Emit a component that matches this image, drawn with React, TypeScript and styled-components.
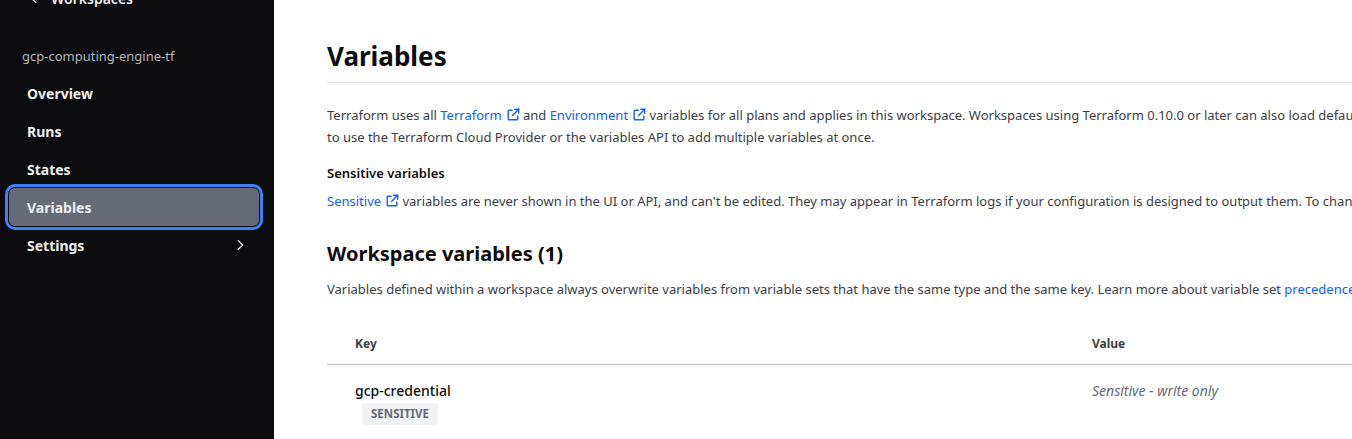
import React from "react";
import styled, { createGlobalStyle } from "styled-components";

const GlobalStyle = createGlobalStyle`
  html, body {
    margin: 0;
    padding: 0;
    height: 100%;
    overflow: hidden;
    background: #ffffff;
    font-family: "Noto Sans", "Open Sans", sans-serif;
  }
`;

const Layout = styled.div`
  display: flex;
  width: 1352px;
  height: 439px;
  overflow: hidden;
`;

const Sidebar = styled.nav`
  flex: 0 0 274px;
  background-color: #0c0c0e;
  display: flex;
  flex-direction: column;
  margin-top: -14px;
  padding: 0 13px 0 7px;
  box-sizing: border-box;
`;

const BackLink = styled.a`
  display: flex;
  align-items: center;
  gap: 10px;
  height: 24px;
  padding-left: 20px;
  color: #efeff1;
  font-size: 14px;
  font-weight: 600;
  text-decoration: none;
`;

const WorkspaceName = styled.div`
  margin: 36px 0 8px 15px;
  color: #b2b6bd;
  font-size: 13px;
  line-height: 20px;
`;

const NavList = styled.ul`
  list-style: none;
  margin: 0;
  padding: 0;
  display: flex;
  flex-direction: column;
`;

const NavItem = styled.li<{ $active?: boolean }>`
  display: flex;
  align-items: center;
  justify-content: space-between;
  height: 38px;
  padding: 0 14px 0 ${(p) => (p.$active ? "18px" : "20px")};
  box-sizing: border-box;
  border-radius: 6px;
  color: #efeff1;
  font-size: 14px;
  font-weight: 700;
  background: ${(p) => (p.$active ? "#656a76" : "transparent")};
  box-shadow: ${(p) =>
    p.$active ? "0 0 0 1px #0c0c0e, 0 0 0 4px #3b82f6" : "none"};
  margin: ${(p) => (p.$active ? "0 2px" : "0")};
`;

const Main = styled.main`
  flex: 1;
  min-width: 0;
  padding: 34px 0 0 53px;
  overflow: hidden;
`;

const Title = styled.h1`
  margin: 0;
  padding-bottom: 4px;
  font-size: 26px;
  line-height: 44px;
  font-weight: 700;
  color: #0c0c0e;
  border-bottom: 1px solid #dedfe3;
`;

const Text = styled.p`
  margin: 0;
  font-size: 13px;
  line-height: 22px;
  color: #3b3d45;
  white-space: nowrap;
`;

const Intro = styled(Text)`
  margin-top: 21px;
`;

const SubHeading = styled.h3`
  margin: 14px 0 6px;
  font-size: 13px;
  line-height: 22px;
  font-weight: 600;
  color: #0c0c0e;
`;

const Link = styled.a`
  color: #1060ff;
  text-decoration: none;
  display: inline-flex;
  align-items: center;
  gap: 4px;
`;

const SectionTitle = styled.h2`
  margin: 28px 0 10px;
  font-size: 20px;
  line-height: 28px;
  font-weight: 700;
  color: #0c0c0e;
`;

const Table = styled.table`
  margin-top: 20px;
  width: 1100px;
  border-collapse: collapse;
`;

const HeadCell = styled.th<{ $width?: number }>`
  text-align: left;
  font-size: 12px;
  font-weight: 700;
  color: #3b3d45;
  height: 42px;
  padding: 2px 0 0 28px;
  border-bottom: 1px solid #b8bccb;
  width: ${(p) => (p.$width ? `${p.$width}px` : "auto")};
`;

const Cell = styled.td`
  vertical-align: top;
  padding: 16px 0 14px 28px;
  border-bottom: 1px solid #dedfe3;
`;

const KeyName = styled.div`
  font-size: 14px;
  font-weight: 500;
  line-height: 20px;
  color: #0c0c0e;
`;

const Badge = styled.span`
  display: inline-block;
  margin: 2px 0 0 7px;
  padding: 0 9px;
  height: 22px;
  line-height: 22px;
  border-radius: 3px;
  background: #f1f2f3;
  color: #656a76;
  font-size: 11.5px;
  font-weight: 700;
`;

const SensitiveValue = styled.div`
  font-size: 14px;
  line-height: 20px;
  font-style: italic;
  color: #656a76;
`;

const ExternalIcon = () => (
  <svg width="14" height="14" viewBox="0 0 16 16" fill="none" stroke="currentColor" strokeWidth="1.6" strokeLinecap="round" strokeLinejoin="round">
    <path d="M7 2.5H3.5a1 1 0 0 0-1 1v9a1 1 0 0 0 1 1h9a1 1 0 0 0 1-1V9" />
    <path d="M10 1.5h4.5V6" />
    <path d="M14.5 1.5 7.5 8.5" />
  </svg>
);

const Chevron = ({ dir }: { dir: "left" | "right" }) => (
  <svg width="14" height="14" viewBox="0 0 16 16" fill="none" stroke="currentColor" strokeWidth="1.6" strokeLinecap="round" strokeLinejoin="round">
    {dir === "right" ? <path d="M6 3l5 5-5 5" /> : <path d="M10 3L5 8l5 5" />}
  </svg>
);

const navItems = ["Overview", "Runs", "States", "Variables", "Settings"];

export default function App() {
  return (
    <>
      <GlobalStyle />
      <Layout>
        <Sidebar>
          <BackLink>
            <Chevron dir="left" />
            Workspaces
          </BackLink>
          <WorkspaceName>gcp-computing-engine-tf</WorkspaceName>
          <NavList>
            {navItems.map((item) => (
              <NavItem key={item} $active={item === "Variables"}>
                {item}
                {item === "Settings" && <Chevron dir="right" />}
              </NavItem>
            ))}
          </NavList>
        </Sidebar>
        <Main>
          <Title>Variables</Title>
          <Intro>
            Terraform uses all <Link>Terraform <ExternalIcon /></Link> and{" "}
            <Link>Environment <ExternalIcon /></Link> variables for all plans and applies in this
            workspace. Workspaces using Terraform 0.10.0 or later can also load default values from
            any *.auto.tfvars files in the configuration. You may want
            <br />
            to use the Terraform Cloud Provider or the variables API to add multiple variables at
            once.
          </Intro>
          <SubHeading>Sensitive variables</SubHeading>
          <Text>
            <Link>Sensitive <ExternalIcon /></Link> variables are never shown in the UI or API, and
            can't be edited. They may appear in Terraform logs if your configuration is designed to
            output them. To change a sensitive variable, delete and replace it.
          </Text>
          <SectionTitle>Workspace variables (1)</SectionTitle>
          <Text>
            Variables defined within a workspace always overwrite variables from variable sets that
            have the same type and the same key. Learn more about variable set{" "}
            <Link>precedence <ExternalIcon /></Link>.
          </Text>
          <Table>
            <thead>
              <tr>
                <HeadCell $width={709}>Key</HeadCell>
                <HeadCell>Value</HeadCell>
              </tr>
            </thead>
            <tbody>
              <tr>
                <Cell>
                  <KeyName>gcp-credential</KeyName>
                  <Badge>SENSITIVE</Badge>
                </Cell>
                <Cell>
                  <SensitiveValue>Sensitive - write only</SensitiveValue>
                </Cell>
              </tr>
            </tbody>
          </Table>
        </Main>
      </Layout>
    </>
  );
}
